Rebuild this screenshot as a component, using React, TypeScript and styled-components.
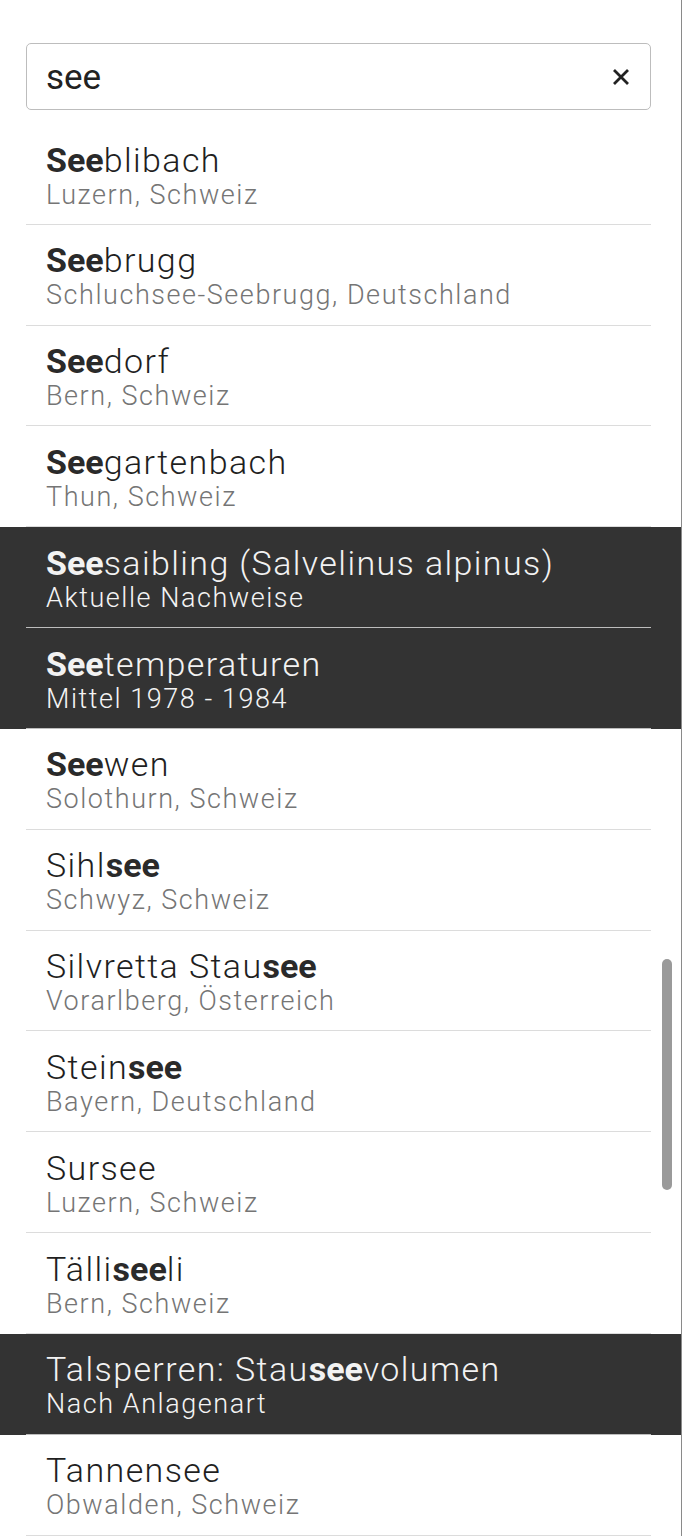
import React from "react";
import styled, { createGlobalStyle } from "styled-components";

const Global = createGlobalStyle`
  html, body { margin: 0; padding: 0; background: #fff; }
  body { font-family: Roboto, "Noto Sans", sans-serif; overflow: hidden; }
`;

const Frame = styled.div`
  position: relative;
  width: 681px;
  height: 1536px;
  border-right: 1px solid #8a8a8a;
  background: #fff;
  overflow: hidden;
`;

const SearchWrap = styled.div`
  padding: 43px 30px 14px 26px;
`;

const SearchBox = styled.div`
  display: flex;
  align-items: center;
  height: 67px;
  box-sizing: border-box;
  border: 1px solid #bdbdbd;
  border-radius: 5px;
  padding: 0 20px 0 19px;
`;

const SearchText = styled.span`
  flex: 1;
  font-family: Roboto, sans-serif;
  font-size: 35px;
  font-weight: 400;
  color: #222;
  line-height: 40px;
  padding-top: 2px;
`;

const ClearIcon = styled.svg`
  width: 18px;
  height: 18px;
  display: block;
`;

const List = styled.ul`
  list-style: none;
  margin: 0;
  padding: 0;
`;

const Item = styled.li<{ $dark?: boolean }>`
  height: 100.83px;
  box-sizing: border-box;
  padding: 0 30px 0 26px;
  background: ${(p) => (p.$dark ? "#333333" : "#fff")};
`;

const ItemInner = styled.div<{ $dark?: boolean }>`
  height: 100%;
  box-sizing: border-box;
  border-bottom: 1px solid ${(p) => (p.$dark ? "#bdbdbd" : "#dcdcdc")};
  display: flex;
  flex-direction: column;
  justify-content: flex-start;
  padding: 17.5px 0 0 20px;
`;

const Title = styled.div<{ $dark?: boolean }>`
  font-family: Roboto, sans-serif;
  font-weight: 300;
  font-size: 34px;
  line-height: 37px;
  letter-spacing: 1.4px;
  color: ${(p) => (p.$dark ? "#f2f2f2" : "#1f1f1f")};
  white-space: nowrap;
  b {
    font-weight: 700;
    letter-spacing: 0;
    color: ${(p) => (p.$dark ? "#f2f2f2" : "#2a2a2a")};
  }
`;

const Sub = styled.div<{ $dark?: boolean }>`
  font-family: Roboto, sans-serif;
  font-weight: 300;
  font-size: 27px;
  line-height: 32px;
  letter-spacing: 1.55px;
  color: ${(p) => (p.$dark ? "#f4f4f4" : "#757575")};
  white-space: nowrap;
`;

const Scrollbar = styled.div`
  position: absolute;
  left: 662px;
  top: 959px;
  width: 10px;
  height: 231px;
  border-radius: 5px;
  background: #9a9a9a;
`;

type Row = { t: string; s: string; dark?: boolean };

const rows: Row[] = [
  { t: "[See]blibach", s: "Luzern, Schweiz" },
  { t: "[See]brugg", s: "Schluchsee-Seebrugg, Deutschland" },
  { t: "[See]dorf", s: "Bern, Schweiz" },
  { t: "[See]gartenbach", s: "Thun, Schweiz" },
  { t: "[See]saibling (Salvelinus alpinus)", s: "Aktuelle Nachweise", dark: true },
  { t: "[See]temperaturen", s: "Mittel 1978 - 1984", dark: true },
  { t: "[See]wen", s: "Solothurn, Schweiz" },
  { t: "Sihl[see]", s: "Schwyz, Schweiz" },
  { t: "Silvretta Stau[see]", s: "Vorarlberg, Österreich" },
  { t: "Stein[see]", s: "Bayern, Deutschland" },
  { t: "Sursee", s: "Luzern, Schweiz" },
  { t: "Tälli[see]li", s: "Bern, Schweiz" },
  { t: "Talsperren: Stau[see]volumen", s: "Nach Anlagenart", dark: true },
  { t: "Tannensee", s: "Obwalden, Schweiz" },
];

function renderTitle(t: string) {
  const parts = t.split(/(\[[^\]]+\])/).filter(Boolean);
  return parts.map((p, i) =>
    p.startsWith("[") ? <b key={i}>{p.slice(1, -1)}</b> : <React.Fragment key={i}>{p}</React.Fragment>
  );
}

export default function App() {
  return (
    <>
      <Global />
      <Frame>
        <SearchWrap>
          <SearchBox>
            <SearchText>see</SearchText>
            <ClearIcon viewBox="0 0 18 18">
              <path d="M2 2 L16 16 M16 2 L2 16" stroke="#222" strokeWidth="2.8" strokeLinecap="butt" />
            </ClearIcon>
          </SearchBox>
        </SearchWrap>
        <List>
          {rows.map((r, i) => (
            <Item key={i} $dark={r.dark}>
              <ItemInner $dark={r.dark}>
                <Title $dark={r.dark}>{renderTitle(r.t)}</Title>
                <Sub $dark={r.dark}>{r.s}</Sub>
              </ItemInner>
            </Item>
          ))}
        </List>
        <Scrollbar />
      </Frame>
    </>
  );
}
